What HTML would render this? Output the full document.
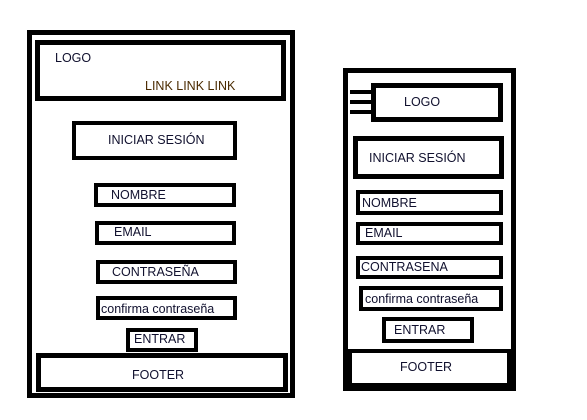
<!DOCTYPE html><html><head><style>
body{margin:0;width:587px;height:420px;background:#fff;position:relative;overflow:hidden;font-family:"Liberation Sans",sans-serif;font-size:12.5px;color:#10102e}
.b{position:absolute;box-sizing:border-box;border:4px solid #000;background:#fff}
.t{position:absolute;white-space:nowrap;line-height:14px}
.k{position:absolute;background:#000}
</style></head><body>
<div class="b" style="left:27px;top:30px;width:268px;height:368px;border-width:5px"></div>
<div class="b" style="left:35px;top:40px;width:251px;height:61px;border-width:5px"></div>
<div class="t" style="left:55px;top:51px">LOGO</div>
<div class="t" style="left:145px;top:79px;color:#4a2a00">LINK LINK LINK</div>
<div class="b" style="left:72px;top:121px;width:165px;height:39px"></div>
<div class="t" style="left:108px;top:133px">INICIAR SESIÓN</div>
<div class="b" style="left:94px;top:183px;width:142px;height:24px"></div>
<div class="t" style="left:111px;top:188px">NOMBRE</div>
<div class="b" style="left:95px;top:221px;width:141px;height:24px"></div>
<div class="t" style="left:114px;top:225px">EMAIL</div>
<div class="b" style="left:96px;top:260px;width:141px;height:24px"></div>
<div class="t" style="left:112px;top:265px">CONTRASEÑA</div>
<div class="b" style="left:96px;top:296px;width:141px;height:24px"></div>
<div class="t" style="left:101px;top:302px">confirma contraseña</div>
<div class="b" style="left:126px;top:328px;width:72px;height:24px"></div>
<div class="t" style="left:134px;top:332px">ENTRAR</div>
<div class="b" style="left:36px;top:353px;width:252px;height:39px;border-width:5px"></div>
<div class="t" style="left:132px;top:368px">FOOTER</div>

<div class="b" style="left:343px;top:68px;width:173px;height:323px;border-width:5px"></div>
<div class="b" style="left:371px;top:83px;width:132px;height:39px;border-width:5px"></div>
<div class="k" style="left:350px;top:90px;width:22px;height:4px"></div>
<div class="k" style="left:350px;top:100px;width:22px;height:4px"></div>
<div class="k" style="left:350px;top:110px;width:22px;height:4px"></div>
<div class="t" style="left:404px;top:95px">LOGO</div>
<div class="b" style="left:353px;top:136px;width:151px;height:43px;border-width:5px"></div>
<div class="t" style="left:369px;top:151px">INICIAR SESIÓN</div>
<div class="b" style="left:356px;top:190px;width:147px;height:25px"></div>
<div class="t" style="left:362px;top:196px">NOMBRE</div>
<div class="b" style="left:356px;top:222px;width:147px;height:23px"></div>
<div class="t" style="left:365px;top:226px">EMAIL</div>
<div class="b" style="left:356px;top:256px;width:147px;height:23px"></div>
<div class="t" style="left:361px;top:260px">CONTRASENA</div>
<div class="b" style="left:359px;top:286px;width:144px;height:25px"></div>
<div class="t" style="left:365px;top:292px">confirma contraseña</div>
<div class="b" style="left:382px;top:317px;width:92px;height:26px"></div>
<div class="t" style="left:394px;top:323px">ENTRAR</div>
<div class="k" style="left:343px;top:349px;width:173px;height:42px"></div>
<div class="b" style="left:352px;top:353px;width:155px;height:30px;border:none"></div>
<div class="t" style="left:400px;top:360px">FOOTER</div>
</body></html>
